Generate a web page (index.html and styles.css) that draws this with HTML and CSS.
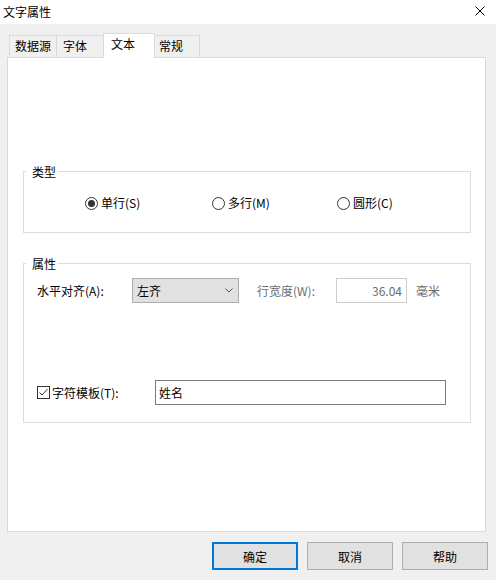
FILE: index.html
```html
<!DOCTYPE html>
<html lang="zh-CN">
<head>
<meta charset="utf-8">
<title>文字属性</title>
<link rel="stylesheet" href="styles.css">
</head>
<body>
<div class="dialog">
  <div class="titlebar">
    <span class="title">文字属性</span>
    <svg class="close" width="10" height="10" viewBox="0 0 10 10"><path d="M0.5 0.5L9.5 9.5M9.5 0.5L0.5 9.5" stroke="#000" stroke-width="1" fill="none"/></svg>
  </div>
  <div class="tabs">
    <div class="tab t1">数据源</div>
    <div class="tab t2">字体</div>
    <div class="tab active">文本</div>
    <div class="tab t4">常规</div>
  </div>
  <div class="panel">
    <fieldset class="group type-group">
      <legend>类型</legend>
      <div class="radios">
        <div class="radio r1"><span class="dot checked"></span>单行(S)</div>
        <div class="radio r2"><span class="dot"></span>多行(M)</div>
        <div class="radio"><span class="dot"></span>圆形(C)</div>
      </div>
    </fieldset>
    <fieldset class="group props">
      <legend>属性</legend>
      <div class="row row1">
        <span class="align-lbl">水平对齐(A):</span>
        <div class="combo"><span>左齐</span><svg width="8" height="5" viewBox="0 0 8 5"><path d="M0.5 0.5L4 4L7.5 0.5" stroke="#555" stroke-width="1" fill="none"/></svg></div>
        <span class="width-lbl disabled">行宽度(W):</span>
        <div class="num">36.04</div>
        <span class="unit disabled">毫米</span>
      </div>
      <div class="row row2">
        <span class="check"><svg width="11" height="11" viewBox="0 0 11 11"><path d="M1.5 5.5L4 8L9.5 2" stroke="#333" stroke-width="1" fill="none"/></svg></span>
        <span class="chk-lbl">字符模板(T):</span>
        <div class="text-input">姓名</div>
      </div>
    </fieldset>
  </div>
  <div class="buttons">
    <div class="btn default">确定</div>
    <div class="btn">取消</div>
    <div class="btn">帮助</div>
  </div>
</div>
</body>
</html>
```

FILE: styles.css
```css
* { box-sizing: border-box; }

body {
  margin: 0;
  width: 496px;
  height: 580px;
  overflow: hidden;
  background: #f0f0f0;
  font-family: "Noto Sans CJK SC", "Microsoft YaHei", sans-serif;
  font-size: 12px;
  color: #000;
}

.titlebar {
  height: 24px;
  background: #fff;
  display: flex;
  justify-content: space-between;
  padding: 0 11px 0 3px;
}
.title { line-height: 24px; }
.close { margin-top: 6px; }

.tabs {
  display: flex;
  align-items: flex-end;
  height: 33px;
  padding-left: 9px;
}
.tab {
  height: 22px;
  border: 1px solid #d9d9d9;
  border-bottom: none;
  background: #f0f0f0;
  line-height: 20px;
  padding-left: 5px;
  margin-left: -1px;
  white-space: nowrap;
}
.tab.t1 { margin-left: 0; width: 48px; }
.tab.t2 { width: 48px; padding-left: 6px; }
.tab.active {
  width: 52px;
  height: 25px;
  margin-bottom: -1px;
  background: #fff;
  padding-left: 7px;
  position: relative;
  z-index: 1;
}
.tab.t4 { width: 46px; padding-left: 4px; }

.panel {
  margin-left: 7px;
  width: 479px;
  height: 475px;
  border: 1px solid #d9d9d9;
  background: #fff;
}

.group {
  margin: 0 14px 0 15px;
  padding: 0;
  border: 1px solid #dcdcdc;
  min-width: 0;
}
.group legend {
  margin-left: 2px;
  padding: 0 2px 0 6px;
  line-height: 17px;
}
.type-group { margin-top: 105px; }
.props { margin-top: 22px; }

.radios {
  display: flex;
  padding: 15px 0 21px 61px;
}
.radio {
  display: flex;
  align-items: center;
  line-height: 16px;
  white-space: nowrap;
}
.r1 { width: 127px; }
.r2 { width: 125px; }
.dot {
  width: 13px;
  height: 13px;
  border: 1px solid #333;
  border-radius: 50%;
  margin-right: 3px;
  display: flex;
  align-items: center;
  justify-content: center;
}
.dot.checked::after {
  content: "";
  width: 7px;
  height: 7px;
  border-radius: 50%;
  background: #333;
}

.row {
  display: flex;
  align-items: center;
  padding-left: 13px;
  white-space: nowrap;
}
.row1 { margin-top: 6px; }
.row2 { margin-top: 77px; margin-bottom: 17px; }

.align-lbl { width: 95px; }
.combo {
  width: 107px;
  height: 25px;
  background: #e1e1e1;
  border: 1px solid #adadad;
  display: flex;
  align-items: center;
  justify-content: space-between;
  padding: 0 5px 0 4px;
}
.disabled { color: #6d6d6d; }
.width-lbl { margin-left: 18px; width: 79px; }
.num {
  width: 71px;
  height: 25px;
  border: 1px solid #cccccc;
  background: #fff;
  text-align: right;
  padding-right: 4px;
  line-height: 23px;
  color: #6d6d6d;
}
.unit { margin-left: 9px; }

.check {
  width: 13px;
  height: 13px;
  border: 1px solid #333;
  margin-right: 2px;
  display: flex;
}
.chk-lbl { width: 103px; }
.text-input {
  width: 291px;
  height: 25px;
  border: 1px solid #7a7a7a;
  padding-left: 3px;
  line-height: 23px;
  background: #fff;
}

.buttons {
  display: flex;
  justify-content: flex-end;
  gap: 9px;
  padding-right: 8px;
  margin-top: 10px;
}
.btn {
  width: 86px;
  height: 28px;
  background: #e1e1e1;
  border: 1px solid #adadad;
  display: flex;
  align-items: center;
  justify-content: center;
}
.btn.default { border: 2px solid #0078d7; }
```
